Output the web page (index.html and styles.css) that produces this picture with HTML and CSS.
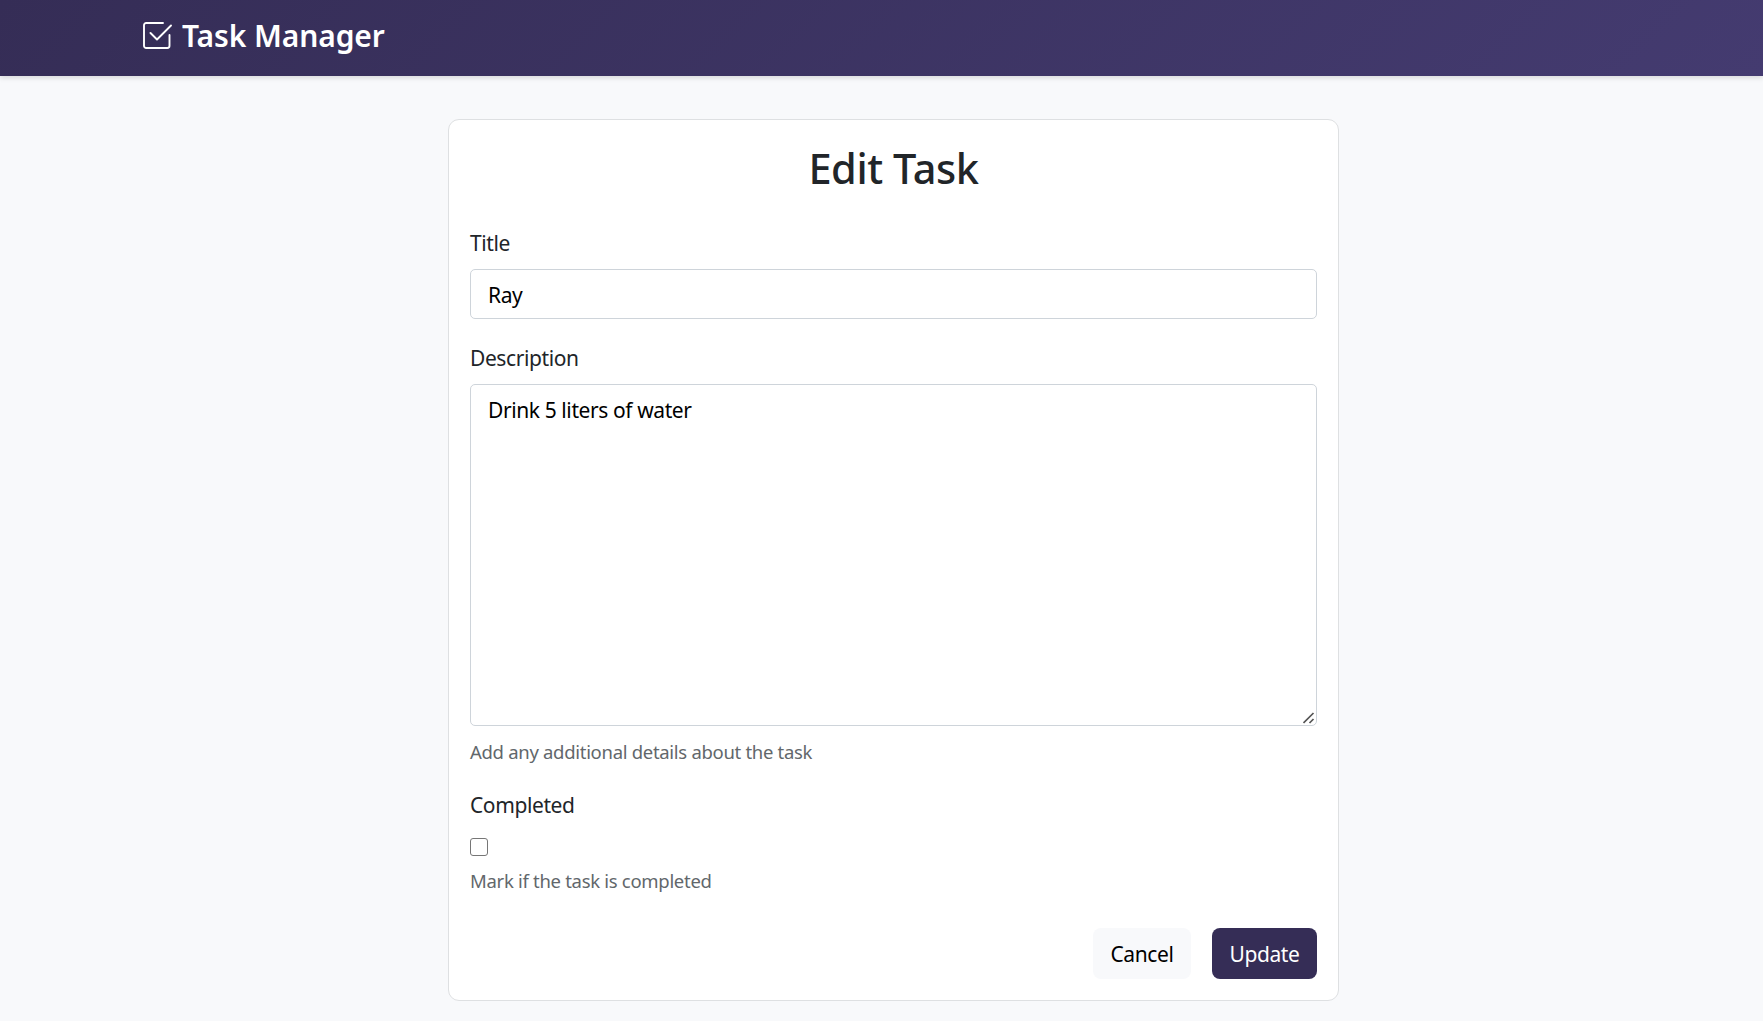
FILE: index.html
```html
<!DOCTYPE html>
<html lang="en">
<head>
<meta charset="utf-8">
<title>Task Manager</title>
<link rel="stylesheet" href="styles.css">
</head>
<body>
<header class="navbar">
  <a class="brand">
    <svg class="brand-icon" viewBox="0 0 29 29" fill="none" stroke="currentColor" stroke-width="1.9" stroke-linecap="round" stroke-linejoin="round"><path d="M20 2H3.200A2.200 2.200 0 0 0 1 4.200V24.800A2.200 2.200 0 0 0 3.200 27H24.300A2.200 2.200 0 0 0 26.500 24.800V14"/><path d="M7.500 12L14 18.500L28 4.500"/></svg>
    <span class="brand-name">Task Manager</span>
  </a>
</header>
<main class="page">
  <form class="card">
    <h1 class="heading"><span>Edit Task</span></h1>
    <label class="label" for="title">Title</label>
    <input class="control" id="title" type="text" value="Ray">
    <label class="label label-description" for="description">Description</label>
    <div class="area-wrap">
      <textarea class="control area" id="description">Drink 5 liters of water</textarea>
      <svg class="grip" viewBox="0 0 12 12" stroke="#555" stroke-width="1.700"><path d="M.5 11L10.500 1M6.500 11L10.500 7"/></svg>
    </div>
    <div class="help">Add any additional details about the task</div>
    <label class="label label-completed" for="completed">Completed</label>
    <input class="check" id="completed" type="checkbox">
    <div class="help help-check">Mark if the task is completed</div>
    <div class="actions">
      <button class="btn btn-light" type="button">Cancel</button>
      <button class="btn btn-primary" type="button">Update</button>
    </div>
  </form>
</main>
</body>
</html>
```
FILE: styles.css
```css
* { box-sizing: border-box; }
body {
  margin: 0;
  height: 1021px;
  overflow: hidden;
  background: #f8f9fb;
  color: #212529;
  font-family: "Segoe UI", "Noto Sans", sans-serif;
  font-size: 21px;
  line-height: 32px;
  letter-spacing: -0.4px;
}
.navbar {
  height: 76px;
  padding: 0 142px;
  display: flex;
  align-items: center;
  background: linear-gradient(135deg, #352d56 0%, #443b70 100%);
  box-shadow: 0 2px 5px rgba(0, 0, 0, .13);
}
.brand { display: flex; align-items: center; gap: 10px; height: 70px; margin-bottom: 6px; padding-left: 1px; color: #fff; }
.brand-icon { width: 29px; height: 29px; }
.brand-name { padding-top: 2px; font-size: 30px; font-weight: 600; letter-spacing: -0.1px; }
.page { display: flex; padding: 43px 0 0 448px; }
.card {
  display: flex;
  flex-direction: column;
  width: 891px;
  height: 882px;
  padding: 21px;
  background: #fff;
  border: 1px solid #dee0e2;
  border-radius: 11px;
}
.heading {
  margin: 0 0 32px;
  font-size: 41.5px;
  font-weight: 500;
  line-height: 54px;
  text-align: center;
}
.label { height: 32px; margin-bottom: 10px; }
.control {
  flex: none;
  display: block;
  width: 847px;
  height: 50px;
  margin: 0;
  padding: 9px 17px 7px;
  font: inherit;
  letter-spacing: inherit;
  color: #000;
  background: #fff;
  border: 1px solid #ced4da;
  border-radius: 5px;
}
.label-description { margin-top: 23px; }
.area-wrap { position: relative; }
.area { height: 342px; resize: none; }
.grip { position: absolute; right: 2px; bottom: 2px; width: 12px; height: 12px; }
.help { margin-top: 10px; height: 32px; font-size: 18.5px; letter-spacing: -0.3px; color: #62676b; }
.label-completed { margin-top: 21px; margin-bottom: 17px; }
.check { flex: none; width: 18px; height: 18px; margin: 0; appearance: none; border: 1px solid #767676; border-radius: 3px; background: #fff; }
.help-check { margin-top: 9px; }
.actions { display: flex; justify-content: flex-end; gap: 21px; margin-top: 31px; }
.btn { height: 51px; padding: 0; border: 0; border-radius: 8px; font: inherit; letter-spacing: inherit; }
.btn-light { width: 98px; background: #f8f9fb; color: #000; }
.btn-primary { width: 105px; background: #352d56; color: #fff; }
```
